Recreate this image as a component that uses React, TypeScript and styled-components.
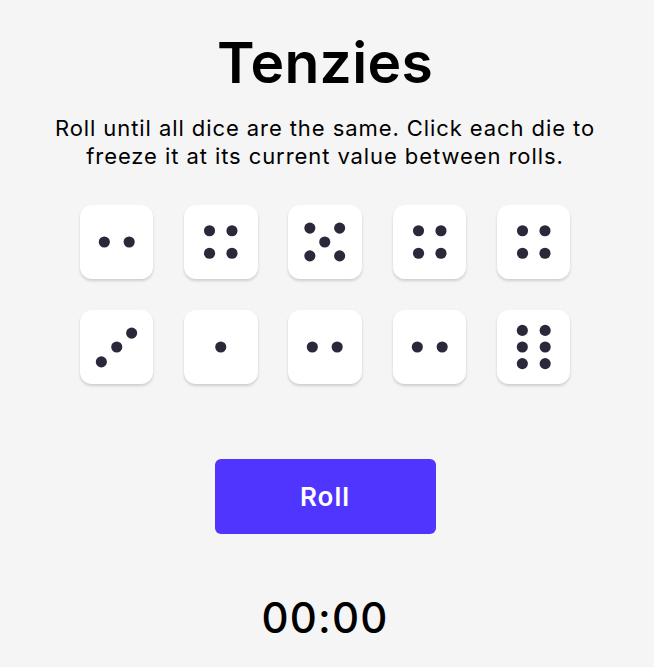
import React from "react";
import styled, { createGlobalStyle } from "styled-components";

const Global = createGlobalStyle`
  html, body { margin: 0; padding: 0; background: #f5f5f5; }
  body { font-family: Inter, "Noto Sans", sans-serif; color: #000; }
`;

const Main = styled.main`
  display: flex;
  flex-direction: column;
  align-items: center;
  padding: 28.4px 4px 0 0;
`;

const Title = styled.h1`
  margin: 0;
  font-size: 57px;
  font-weight: 600;
  line-height: 70px;
  letter-spacing: 0.3px;
`;

const Instructions = styled.p`
  margin: 17px 0 0;
  max-width: 580px;
  text-align: center;
  font-size: 22px;
  line-height: 27.5px;
  font-weight: 400;
  letter-spacing: 0.92px;
`;

const DiceGrid = styled.div`
  display: grid;
  grid-template-columns: repeat(5, 73.5px);
  column-gap: 30.75px;
  row-gap: 31px;
  margin-top: 34.75px;
`;

const DieButton = styled.button`
  width: 73.5px;
  height: 74px;
  padding: 0;
  border: none;
  border-radius: 12px;
  background: #ffffff;
  box-shadow: 0 2px 3px rgba(0, 0, 0, 0.16);
  cursor: pointer;
  display: block;
`;

const RollButton = styled.button`
  margin-top: 75px;
  width: 221px;
  height: 75px;
  border: none;
  border-radius: 6px;
  background: #5035ff;
  color: #fff;
  font-family: Inter, sans-serif;
  font-size: 26px;
  font-weight: 600;
  letter-spacing: 1px;
  cursor: pointer;
`;

const Timer = styled.div`
  margin-top: 58px;
  font-size: 42px;
  font-weight: 500;
  line-height: 51px;
  letter-spacing: 1.2px;
`;

const faces: Record<number, [number, number][]> = {
  1: [[0, 0]],
  2: [[-12.5, 0], [12.5, 0]],
  3: [[-15.5, 15], [0, 0], [15, -14]],
  4: [[-11.3, -11.3], [11.3, -11.3], [-11.3, 11.3], [11.3, 11.3]],
  5: [[-15, -14], [15, -14], [0, 0], [-15, 14], [15, 14]],
  6: [[-11.5, -16.7], [11.5, -16.7], [-11.5, 0], [11.5, 0], [-11.5, 16.7], [11.5, 16.7]],
};

function Die({ value }: { value: number }) {
  return (
    <DieButton aria-label={`Die with value ${value}`}>
      <svg width="100%" height="100%" viewBox="-37 -37 74 74">
        {faces[value].map(([x, y], i) => (
          <circle key={i} cx={x} cy={y} r={5.6} fill="#2b283a" />
        ))}
      </svg>
    </DieButton>
  );
}

const values = [2, 4, 5, 4, 4, 3, 1, 2, 2, 6];

export default function App() {
  return (
    <>
      <Global />
      <Main>
        <Title>Tenzies</Title>
        <Instructions>
          Roll until all dice are the same. Click each die to freeze it at its current value between rolls.
        </Instructions>
        <DiceGrid>
          {values.map((v, i) => (
            <Die key={i} value={v} />
          ))}
        </DiceGrid>
        <RollButton>Roll</RollButton>
        <Timer>00:00</Timer>
      </Main>
    </>
  );
}
